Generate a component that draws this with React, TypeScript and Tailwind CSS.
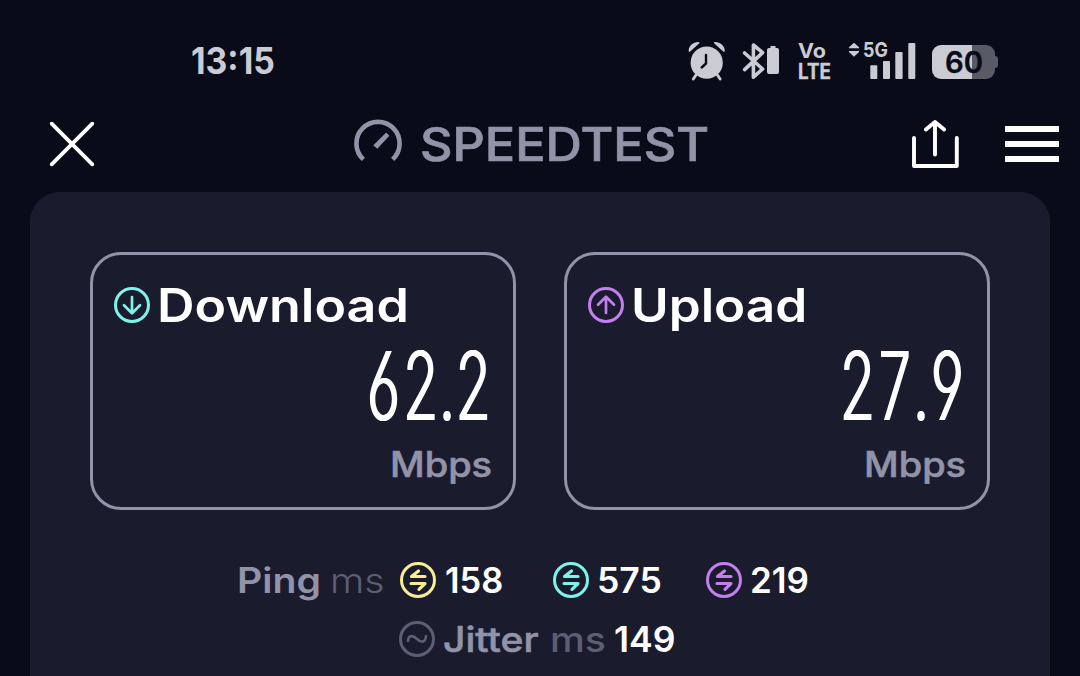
import { useLayoutEffect, useRef, useState, type ReactNode } from "react";

/** A single line of text stretched horizontally to fill its box. */
function Fit({ className = "", text = "", children }: { className?: string; text?: string; children: ReactNode }) {
  const box = useRef<HTMLSpanElement>(null);
  const inner = useRef<HTMLSpanElement>(null);
  const [scale, setScale] = useState(1);
  useLayoutEffect(() => {
    if (box.current && inner.current && inner.current.offsetWidth > 0) {
      setScale(box.current.offsetWidth / inner.current.offsetWidth);
    }
  }, []);
  return (
    <span ref={box} className={`flex shrink-0 items-center ${className}`}>
      <span
        ref={inner}
        className={`inline-block shrink-0 origin-left whitespace-nowrap leading-none ${text}`}
        style={{ transform: `scaleX(${scale})` }}
      >
        {children}
      </span>
    </span>
  );
}

function StatusBar() {
  return (
    <div className="flex h-24 items-center pt-[25px] pl-[191px] text-[#cbccd3]">
      <Fit className="w-[84px]" text="text-[37px] font-bold">13:15</Fit>
      <svg className="ml-[413px] h-10 w-[38px] shrink-0" viewBox="0 0 38 40" fill="currentColor">
        <circle cx="18.7" cy="21.7" r="16.1" />
        <path d="M.6 9.600C1 4.500 5 .9 10.600 1c.8 0 1.200.8.7 1.300L2.200 10.600c-.7.6-1.600 0-1.600-1zM36.800 9.600C36.400 4.500 32.400.9 26.800 1c-.8 0-1.200.8-.7 1.300l9.100 8.300c.7.6 1.600 0 1.600-1z" />
        <path d="M8 34l-2.700 4M29.400 34l2.700 4" stroke="currentColor" strokeWidth="2.800" strokeLinecap="round" />
        <path d="M18 14v8.500l-4.300 4" fill="none" stroke="#0a0b19" strokeWidth="2.400" strokeLinecap="round" />
      </svg>
      <svg className="ml-4 h-10 w-[38px] shrink-0" viewBox="0 0 38 40" fill="currentColor">
        <path d="M2.600 12l18 16-9.200 8.200V4l9.200 7.600-18 17" fill="none" stroke="currentColor" strokeWidth="3.600" strokeLinejoin="round" strokeLinecap="round" />
        <path d="M28.500 5h5v2h1.500a2 2 0 0 1 2 2v22a2 2 0 0 1-2 2h-8a2 2 0 0 1-2-2V9a2 2 0 0 1 2-2h1.500z" />
      </svg>
      <div className="ml-[18px] flex h-10 w-[33px] shrink-0 flex-col justify-between">
        <Fit className="h-5 w-[28px]" text="text-[20px] leading-[16px] font-bold">Vo</Fit>
        <Fit className="h-[19px] w-[33px]" text="text-[21px] leading-[16px] font-bold [-webkit-text-stroke:0.4px_#cbccd3]">LTE</Fit>
      </div>
      <div className="relative ml-[18px] h-10 w-[68px] shrink-0">
        <svg className="h-10 w-[68px]" viewBox="0 0 68 40" fill="currentColor">
          <path d="M5 1.700l5 4.600H0zM5 15.700l5-4.600H0zM0 7.300h10v-1H0zM0 10.100h10v1H0z" />
          <rect x="21.300" y="24.300" width="7" height="13.700" rx="1" />
          <rect x="34" y="20" width="7" height="18" rx="1" />
          <rect x="46.300" y="11" width="7.300" height="27" rx="1" />
          <rect x="59.300" y="2" width="7" height="36" rx="1" />
        </svg>
        <Fit className="absolute top-0 left-[14px] h-[19px] w-[25px]" text="text-[20px] font-bold">5G</Fit>
      </div>
      <div className="ml-[15px] flex shrink-0 items-center pt-[3px]">
        <div className="flex h-[34px] w-[63px] items-center justify-center rounded-[9px] bg-linear-to-r from-[#cbccd3] from-64% to-[#595a66] to-64%">
          <Fit className="w-[38px]" text="text-[30px] font-semibold text-[#0a0b19] [-webkit-text-stroke:0.4px_#0a0b19]">60</Fit>
        </div>
        <div className="h-3 w-[3px] rounded-r-[3px] bg-[#595a66]" />
      </div>
    </div>
  );
}

function Header() {
  return (
    <div className="flex h-24 items-center pl-[49px]">
      <svg className="size-[46px] shrink-0" viewBox="0 0 46 46" fill="none" stroke="#fff" strokeWidth="3.800" strokeLinecap="round">
        <path d="M2.700 2.700l40.600 40.600M43.300 2.700L2.700 43.300" />
      </svg>
      <svg className="ml-[259px] size-12 shrink-0 overflow-visible" viewBox="0 0 48 48">
        <path d="M9.400 39.400A21.600 21.600 0 1 1 38.600 39.400" fill="none" stroke="#9193a8" strokeWidth="4.600" />
        <path d="M19.300 25.200L32.200 12.600l3.200 3.200L23.300 28.800z" fill="#9193a8" />
      </svg>
      <Fit className="ml-[18px] w-[289px]" text="text-[46px] font-medium text-[#9193a8] [-webkit-text-stroke:0.7px_#9193a8]">SPEEDTEST</Fit>
      <svg className="ml-[202px] h-12 w-[48px] shrink-0" viewBox="0 0 48 48" fill="none" stroke="#fff" strokeWidth="3.900" strokeLinecap="round" strokeLinejoin="round">
        <path d="M3 18v28h42.800V18M24 2.500v32M14.900 9.500L24 2l9.100 7.500" />
      </svg>
      <div className="ml-[46px] flex w-[54px] shrink-0 flex-col gap-[9px]">
        <div className="h-1.5 bg-white" />
        <div className="h-1.5 bg-white" />
        <div className="h-1.5 bg-white" />
      </div>
    </div>
  );
}

function RingIcon({ className, d, thin = false }: { className: string; d: string; thin?: boolean }) {
  return (
    <svg className={`size-9 shrink-0 ${className}`} viewBox="-18 -18 36 36" fill="none" stroke="currentColor" strokeWidth={thin ? 2.7 : 3.2} strokeLinecap="round" strokeLinejoin="round">
      <circle r="16.500" strokeWidth="3" />
      <path d={d} />
    </svg>
  );
}

const PING = "M7-3.500H-6.500L.5-9M-7 3.500H7L1 9.400";

function ResultCard({ icon, title, titleWidth, value }: { icon: ReactNode; title: string; titleWidth: string; value: string }) {
  return (
    <div className="flex h-[258px] w-[426px] flex-col rounded-[31px] border-3 border-[#9193a8] pt-[22px] pr-[21px] pl-[21px]">
      <div className="flex h-14 items-center">
        {icon}
        <Fit className={`ml-[7px] ${titleWidth}`} text="text-[46px] font-semibold">{title}</Fit>
      </div>
      <Fit
        className="mt-3 h-20 w-[127px] self-end"
        text="text-[95px] font-light [font-feature-settings:'tnum','cv03','cv04'] [text-shadow:1.2px_0_0_#fff,-1.2px_0_0_#fff]"
      >
        {value}
      </Fit>
      <Fit className="mt-[19px] h-10 w-[102px] self-end" text="text-[35px] font-medium text-[#9193a8] [-webkit-text-stroke:0.6px_#9193a8]">Mbps</Fit>
    </div>
  );
}

export default function App() {
  return (
    <div className="h-[676px] w-[1080px] overflow-hidden bg-[#0a0b19] font-['Inter','Liberation_Sans',sans-serif] text-white">
      <StatusBar />
      <Header />
      <main className="mx-[30px] h-[484px] rounded-t-[30px] bg-[#1b1b2e] pt-[60px]">
        <div className="flex justify-between px-[60px]">
          <ResultCard
            icon={<RingIcon thin className="text-[#7ff3e9]" d="M0-8V8M-8 .3L0 8.300L8 .3" />}
            title="Download"
            titleWidth="w-[252px]"
            value="62.2"
          />
          <ResultCard
            icon={<RingIcon thin className="text-[#c37ff0]" d="M0 8V-8M-8-.3L0-8.300L8-.3" />}
            title="Upload"
            titleWidth="w-[176px]"
            value="27.9"
          />
        </div>
        <div className="mt-[50px] flex h-10 items-center pl-[207px]">
          <Fit className="w-[84px]" text="text-[35px] font-semibold text-[#9193a8]">Ping</Fit>
          <Fit className="ml-[9px] w-[55px]" text="text-[35px] font-light text-[#5d5e73]">ms</Fit>
          <RingIcon className="ml-[15px] text-[#f8ee91]" d={PING} />
          <Fit className="ml-[9px] w-[58px]" text="text-[35px] font-semibold">158</Fit>
          <RingIcon className="ml-[50px] text-[#7ff3e9]" d={PING} />
          <Fit className="ml-2 w-[65px]" text="text-[35px] font-semibold">575</Fit>
          <RingIcon className="ml-[44px] text-[#c37ff0]" d={PING} />
          <Fit className="ml-2 w-[59px]" text="text-[35px] font-semibold">219</Fit>
        </div>
        <div className="mt-[19px] flex h-10 items-center pl-[369px]">
          <RingIcon thin className="text-[#5d5e73]" d="M-9 2C-8.500-4.500-4-4 0 0S8.500 4 9-3" />
          <Fit className="ml-2 w-[96px]" text="text-[35px] font-medium text-[#9193a8] [-webkit-text-stroke:0.6px_#9193a8]">Jitter</Fit>
          <Fit className="ml-[11px] w-[56px]" text="text-[35px] font-medium text-[#5d5e73]">ms</Fit>
          <Fit className="ml-2 w-[62px]" text="text-[35px] font-semibold">149</Fit>
        </div>
      </main>
    </div>
  );
}
